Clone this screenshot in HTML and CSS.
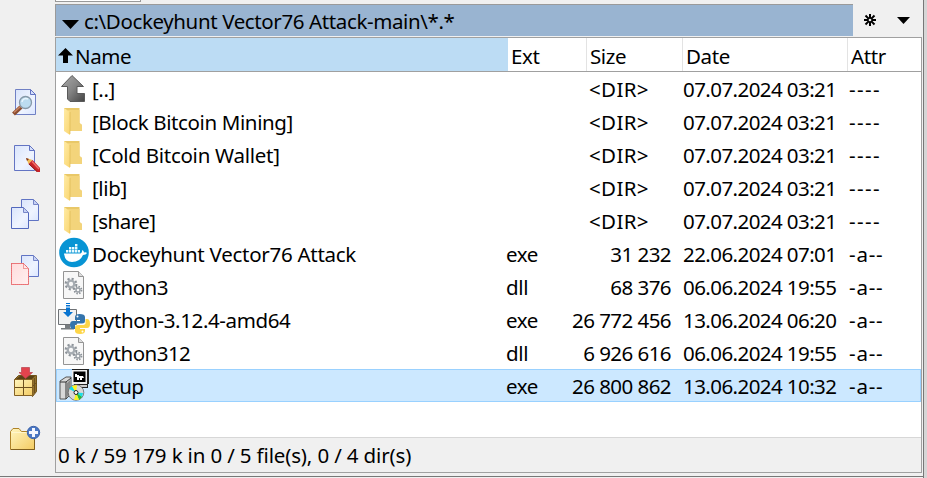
FILE: index.html
```html
<!DOCTYPE html>
<html lang="en">
<head>
<meta charset="utf-8">
<title>File panel</title>
<link rel="stylesheet" href="styles.css">
</head>
<body>
<svg class="defs" aria-hidden="true">
  <defs>
    <linearGradient id="paper" x2="1" y2="1"><stop stop-color="#d9e4fb"/><stop offset=".6" stop-color="#eff4ff"/><stop offset="1" stop-color="#dbe6ff"/></linearGradient>
    <linearGradient id="pink" x2="1" y2="1"><stop stop-color="#ffdcdc"/><stop offset="1" stop-color="#fff0f0"/></linearGradient>
    <linearGradient id="gold" x2="1" y2="1"><stop stop-color="#fff6c0"/><stop offset="1" stop-color="#f3cb62"/></linearGradient>
    <linearGradient id="steel" x2="1" y2="1"><stop stop-color="#aaa"/><stop offset=".5" stop-color="#858585"/><stop offset="1" stop-color="#444"/></linearGradient>
    <linearGradient id="flap" x2="1" y2="1"><stop stop-color="#ffeba5"/><stop offset="1" stop-color="#fad671"/></linearGradient>
    <symbol id="folder" viewBox="0 0 32 32">
      <path d="M6 3H21.5V18L24 20V26H6Z" fill="#e9c868"/>
      <path d="M10 5H21.5V18L24 20V26H10Z" fill="#f3d47b"/>
      <path d="M6 3L12 7V30L6 26Z" fill="url(#flap)"/>
      <path d="M12 7V29" stroke="#ddb850" stroke-width=".7"/>
    </symbol>
    <symbol id="dll" viewBox="0 0 32 32">
      <path d="M5.5 1.5H20.5L25.5 6.5V28.5H5.5Z" fill="#f7f7f7" stroke="#949494"/>
      <path d="M20.5 1.5V6.5H25.5" fill="#ddd" stroke="#949494"/>
      <g fill="none">
        <circle cx="13" cy="14" r="5.3" stroke="#8d9399" stroke-width="2.2" stroke-dasharray="2.1 2.06"/>
        <circle cx="13" cy="14" r="3.3" stroke="#a5abb1" stroke-width="2.3"/>
        <circle cx="20" cy="20" r="3.5" stroke="#8d9399" stroke-width="1.8" stroke-dasharray="1.5 1.25"/>
        <circle cx="20" cy="20" r="2" stroke="#9ba1a7" stroke-width="1.5"/>
      </g>
    </symbol>
  </defs>
</svg>
<div class="app">
  <nav class="tools">
    <svg viewBox="0 0 32 32"><path d="M5.500 2.500H20.500L25.500 7.500V27.500H5.500Z" fill="url(#paper)" stroke="#7080c4"/><path d="M20.500 2.500V7.500H25.500Z" fill="#d5dffb" stroke="#6374c3"/><path d="M11 20L3.500 27" stroke="#8c4d2f" stroke-width="4.200"/><path d="M10.500 19.500L4 25.500" stroke="#c88360" stroke-width="1.500"/><circle cx="15.500" cy="15.500" r="6" fill="#bcdcf0" stroke="#8799a8" stroke-width="1.300"/><path d="M12 15A4 4 0 0 1 18 12" fill="none" stroke="#e9f6ff" stroke-width="1.500"/></svg>
    <svg viewBox="0 0 32 32"><path d="M4.500 2.500H19.500L24.500 7.500V27.500H4.500Z" fill="url(#paper)" stroke="#6374c3"/><path d="M19.500 2.500V7.500H24.500Z" fill="#d5dffb" stroke="#6374c3"/><path d="M16 15L22.500 17L18.500 21Z" fill="#f2bd55"/><path d="M16 15L19 16L17 18Z" fill="#7a3022"/><path d="M22.500 17L30 25V29H27L18.500 21Z" fill="#c9242a"/><path d="M22 18.500L29 26" stroke="#f0716c" stroke-width="1.400"/><path d="M19 21L27 28.500" stroke="#851a1c"/></svg>
    <svg viewBox="0 0 32 32"><path d="M11.500 .500H23.500L28.500 5.500V21.500H11.500Z" fill="url(#paper)" stroke="#6074c4"/><path d="M23.500 .500V5.500H28.500Z" fill="#c7d2f5" stroke="#7887c8"/><path d="M1.500 8.500H13.500L18.500 13.500V29.500H1.500Z" fill="url(#paper)" stroke="#5268bd"/><path d="M13.500 8.500V13.500H18.500Z" fill="#c7d2f5" stroke="#7887c8"/></svg>
    <svg viewBox="0 0 32 32"><path d="M11.500 .500H23.500L28.500 5.500V21.500H11.500Z" fill="url(#paper)" stroke="#6074c4"/><path d="M23.500 .500V5.500H28.500Z" fill="#c7d2f5" stroke="#7887c8"/><path d="M1.500 8.500H13.500L18.500 13.500V29.500H1.500Z" fill="url(#pink)" stroke="#f4a0a0"/><path d="M1.500 8.500H13.500L18.500 13.500V29.500H1.500ZM13.500 8.500V13.500H18.500" fill="none" stroke="#e04c53" stroke-dasharray="1 1"/></svg>
    <svg class="tool-pack" viewBox="0 0 32 32"><path d="M4.500 12.500L8.500 8.500H26.500V24.500L22.500 29.500Z" fill="#91702b" stroke="#705118"/><path d="M6 12L10 9H25L22 12Z" fill="#594115"/><path d="M4.500 12.500H22.500V28.500H4.500Z" fill="url(#gold)" stroke="#846124"/><path d="M13.500 12V28M5 20.500H22M24.500 11V26M23 19L26 16" stroke="#6c501e"/><path d="M11.500 .500H19.500V5.500H22.500L15.500 11.500L9 5.500H11.500Z" fill="#e2434d" stroke="#b8414a" stroke-width=".7"/></svg>
    <svg viewBox="0 0 32 32"><path d="M.500 8.500L3 5.500H9L11.500 8.500H24.500V26.500H.500Z" fill="url(#gold)" stroke="#af8328"/><path d="M1 26.500H24.500V12" fill="none" stroke="#81601d"/><path d="M1.500 9.500H23" stroke="#fff6cb"/><circle cx="23.500" cy="9.500" r="6.200" fill="#4b78c4" stroke="#3d63a9"/><path d="M23.500 5V14M19 9.500H28" stroke="#f4f7ff" stroke-width="3"/></svg>
  </nav>
  <main class="main">
    <div class="drive"></div>
    <div class="pathline">
      <div class="path"><svg width="18" height="9" viewBox="0 0 18 9"><path d="M0 0H17L8.500 9Z"/></svg><span>c:\Dockeyhunt Vector76 Attack-main\*.*</span></div>
      <svg class="star" width="12" height="12" viewBox="0 0 12 12"><path d="M6 0V4M6 8V12M0 6H4M8 6H12M1.500 1.500L4.600 4.600M7.400 7.400L10.500 10.500M10.500 1.500L7.400 4.600M4.600 7.400L1.500 10.500" stroke="#000" stroke-width="2"/><circle cx="6" cy="6" r="2" fill="none" stroke="#000" stroke-width="1.300"/></svg>
      <svg class="down" width="13" height="7" viewBox="0 0 13 7"><path d="M0 0H13L6.500 7Z"/></svg>
    </div>
    <section class="panel">
      <div class="grid head">
        <div class="hname"><svg width="15" height="15" viewBox="0 0 15 15"><path d="M7.500 0L15 7.500H10V15H5V7.500H0Z"/></svg><span>Name</span></div><div>Ext</div><div>Size</div><div>Date</div><div>Attr</div>
      </div>
      <div class="rows">
        <div class="grid row"><div class="name"><svg viewBox="0 0 32 32"><path d="M14 3.500L25.500 14.500H19V21.500H26.500V29.500H12L9.500 27V14.500H3.500Z" fill="url(#steel)" stroke="#5a5a5a"/></svg><span>[..]</span></div><div></div><div class="dir">&lt;DIR&gt;</div><div class="date">07.07.2024 03:21</div><div class="attr dash">----</div></div>
        <div class="grid row"><div class="name"><svg><use href="#folder"/></svg><span>[Block Bitcoin Mining]</span></div><div></div><div class="dir">&lt;DIR&gt;</div><div class="date">07.07.2024 03:21</div><div class="attr dash">----</div></div>
        <div class="grid row"><div class="name"><svg><use href="#folder"/></svg><span class="loose">[Cold Bitcoin Wallet]</span></div><div></div><div class="dir">&lt;DIR&gt;</div><div class="date">07.07.2024 03:21</div><div class="attr dash">----</div></div>
        <div class="grid row"><div class="name"><svg><use href="#folder"/></svg><span>[lib]</span></div><div></div><div class="dir">&lt;DIR&gt;</div><div class="date">07.07.2024 03:21</div><div class="attr dash">----</div></div>
        <div class="grid row"><div class="name"><svg><use href="#folder"/></svg><span class="tight">[share]</span></div><div></div><div class="dir">&lt;DIR&gt;</div><div class="date">07.07.2024 03:21</div><div class="attr dash">----</div></div>
        <div class="grid row"><div class="name"><svg viewBox="0 0 32 32"><circle cx="16" cy="15.500" r="14.800" fill="#0794d4"/><path d="M6 16.500H22.500Q24.500 16 24 13Q26 13.500 26 15.500Q28 15 29 16Q28 18 25 18Q22 25 14 25Q7 25 6 16.500Z" fill="#fff"/><path d="M8 13H10.400V15.500H8ZM11 13H13.400V15.500H11ZM14 13H16.400V15.500H14ZM17 13H19.400V15.500H17ZM20 13H22V15.500H20ZM11 10H13.400V12.400H11ZM14 10H16.400V12.400H14ZM17 10H19.400V12.400H17ZM17 7H19.400V9.400H17Z" fill="#eafaff"/></svg><span class="loose">Dockeyhunt Vector76 Attack</span></div><div class="ext">exe</div><div class="size">31 232</div><div class="date">22.06.2024 07:01</div><div class="attr">-a--</div></div>
        <div class="grid row"><div class="name"><svg><use href="#dll"/></svg><span class="tight">python3</span></div><div class="ext">dll</div><div class="size">68 376</div><div class="date">06.06.2024 19:55</div><div class="attr">-a--</div></div>
        <div class="grid row"><div class="name"><svg viewBox="0 0 32 32"><path d="M1 6.500H18.500V21.500H.500V6.500Z" fill="#f0f1f2" stroke="#6d7175"/><path d="M7 22H12V25H16V26.500H3V25H7Z" fill="#777c80"/><path d="M8 0H12V1H8ZM8 2H12V3.500H8ZM8 4.500H12V9H15L10 14L5 9H8Z" fill="#0874d1"/><path d="M21.500 11Q17 11 17 14V17H22V18H15Q12 18 12 22Q12 26 15 26H17V23Q17 20.500 20 20.500H24Q27 20.500 27 18V14Q27 11 21.500 11Z" fill="#3474ac"/><path d="M22 31Q27 31 27 28V26H22V25H29Q32 25 32 21Q32 16 29 16H27.500V20Q27.500 22 24 22H20Q17 22 17 24.500V28Q17 31 22 31Z" fill="#fdd547"/><circle cx="19.500" cy="13.500" r="1" fill="#fff"/><circle cx="24.500" cy="28.500" r="1" fill="#fff"/></svg><span>python-3.12.4-amd64</span></div><div class="ext">exe</div><div class="size">26 772 456</div><div class="date">13.06.2024 06:20</div><div class="attr">-a--</div></div>
        <div class="grid row"><div class="name"><svg><use href="#dll"/></svg><span class="tight">python312</span></div><div class="ext">dll</div><div class="size">6 926 616</div><div class="date">06.06.2024 19:55</div><div class="attr">-a--</div></div>
        <div class="grid row selected"><div class="name"><svg viewBox="0 0 32 32"><path d="M2 12L8 8H13V25L8 30H2Z" fill="#d8d8d8" stroke="#555"/><path d="M8 13V30M2 13H8L13 9" stroke="#333" fill="none"/><path d="M9 14L12 11V25L9 28Z" fill="#888"/><path d="M14 0H31V15H30V19H16V15H14Z" fill="#222"/><path d="M14 1H29V15H14Z" fill="#eee"/><path d="M15.500 2.500H27.500V13H15.500Z" fill="#000"/><path d="M17 5H19V6H21V7H25L26 9H24V11H22V9H21V11H19V8H17Z" fill="#fff"/><path d="M16 16H29V18H16Z" fill="#ccc"/><circle cx="18" cy="23.500" r="7.800" fill="#d8d8d8" stroke="#555" stroke-width=".7"/><path d="M18 23.500L11 20L14 17Z" fill="#13ddea"/><path d="M18 23.500L14 17L19 16Z" fill="#fff51c"/><path d="M18 23.500L25 24L24 28Z" fill="#17dfe9"/><path d="M18 23.500L24 28L21 31Z" fill="#24b936"/><path d="M18 23.500L21 31L16 31Z" fill="#f6f323"/><circle cx="18" cy="23.500" r="2" fill="#fff" stroke="#222"/></svg><span class="tight">setup</span></div><div class="ext">exe</div><div class="size">26 800 862</div><div class="date">13.06.2024 10:32</div><div class="attr">-a--</div></div>
      </div>
      <footer class="status"><span>0 k / 59 179 k in 0 / 5 file(s), 0 / 4 dir(s)</span></footer>
    </section>
    <div class="bottom"></div>
  </main>
  <div class="edge"></div>
</div>
</body>
</html>
```
FILE: styles.css
```css
* { box-sizing: border-box; }
body { margin: 0; background: #f0f0f0; color: #000; font: 20.500px/32px "Noto Sans", "Open Sans", sans-serif; overflow: hidden; letter-spacing: -0.380px; white-space: nowrap; }
svg { display: block; flex: none; overflow: visible; }
.defs { width: 0; height: 0; position: absolute; }
.app { display: grid; grid-template-columns: 55px 868px 4px; width: 927px; height: 478px; }
.tools { padding: 87px 0 0 10px; display: flex; flex-direction: column; gap: 24px; }
.tools svg { width: 32px; height: 32px; }
.tools .tool-pack { margin-top: 56px; }
.main { display: flex; flex-direction: column; min-width: 0; }
.drive { width: 86px; height: 2px; background: #fff; border: solid #999; border-width: 0 1px 1px; }
.pathline { display: flex; align-items: center; height: 32px; margin-top: 2px; }
.path { width: 798px; height: 32px; background: #99b4d1; border-top: 1px solid #9a9a9a; border-left: 1px solid #9a9a9a; display: flex; align-items: center; padding-left: 6px; }
.path svg { margin: 7px 4px 0 0; }
.star { margin: -1px 0 0 11px; }
.down { margin-left: 21px; }
.panel { width: 867px; height: 436px; margin-top: 1px; border: 1px solid #a0a0a0; background: #fff; display: flex; flex-direction: column; }
.grid { display: grid; grid-template-columns: 452px 78px 96px 165px 74px; grid-template-rows: 33px; }
.head { height: 34px; border-bottom: 1px solid #a0a0a0; line-height: 36px; }
.head > div { padding-left: 3px; }
.head > div:nth-child(n+3) { border-left: 1px solid #e3e3e3; }
.head .hname { background: #bcdcf4; display: flex; padding-left: 2px; gap: 2px; }
.hname svg { margin-top: 10px; }
.row { height: 33px; line-height: 35px; }
.name { display: flex; padding-left: 2px; }
.name svg { width: 32px; height: 32px; margin-right: 2px; }
.loose { letter-spacing: -0.270px; }
.tight { letter-spacing: -0.520px; }
.ext { margin-left: -2px; }
.dir { padding-left: 3px; letter-spacing: 0.350px; }
.size { text-align: right; margin-left: -20px; padding-right: 11px; letter-spacing: -0.550px; }
.date { padding-left: 1px; letter-spacing: -0.570px; }
.attr { padding-left: 2px; letter-spacing: 0.800px; }
.dash { letter-spacing: 1.400px; }
.selected { background: #cce8ff; box-shadow: inset 0 0 0 1px #99d1ff; }
.status { height: 35px; margin-top: auto; border-top: 1px solid #d7d7d7; background: #f0f0f0; padding-left: 2px; line-height: 35px; letter-spacing: -0.150px; }
.bottom { height: 1px; background: #777; margin: 3px -1px 0 -55px; }
.edge { border-left: 1px solid #777; background: #d6d6d6; }
```
